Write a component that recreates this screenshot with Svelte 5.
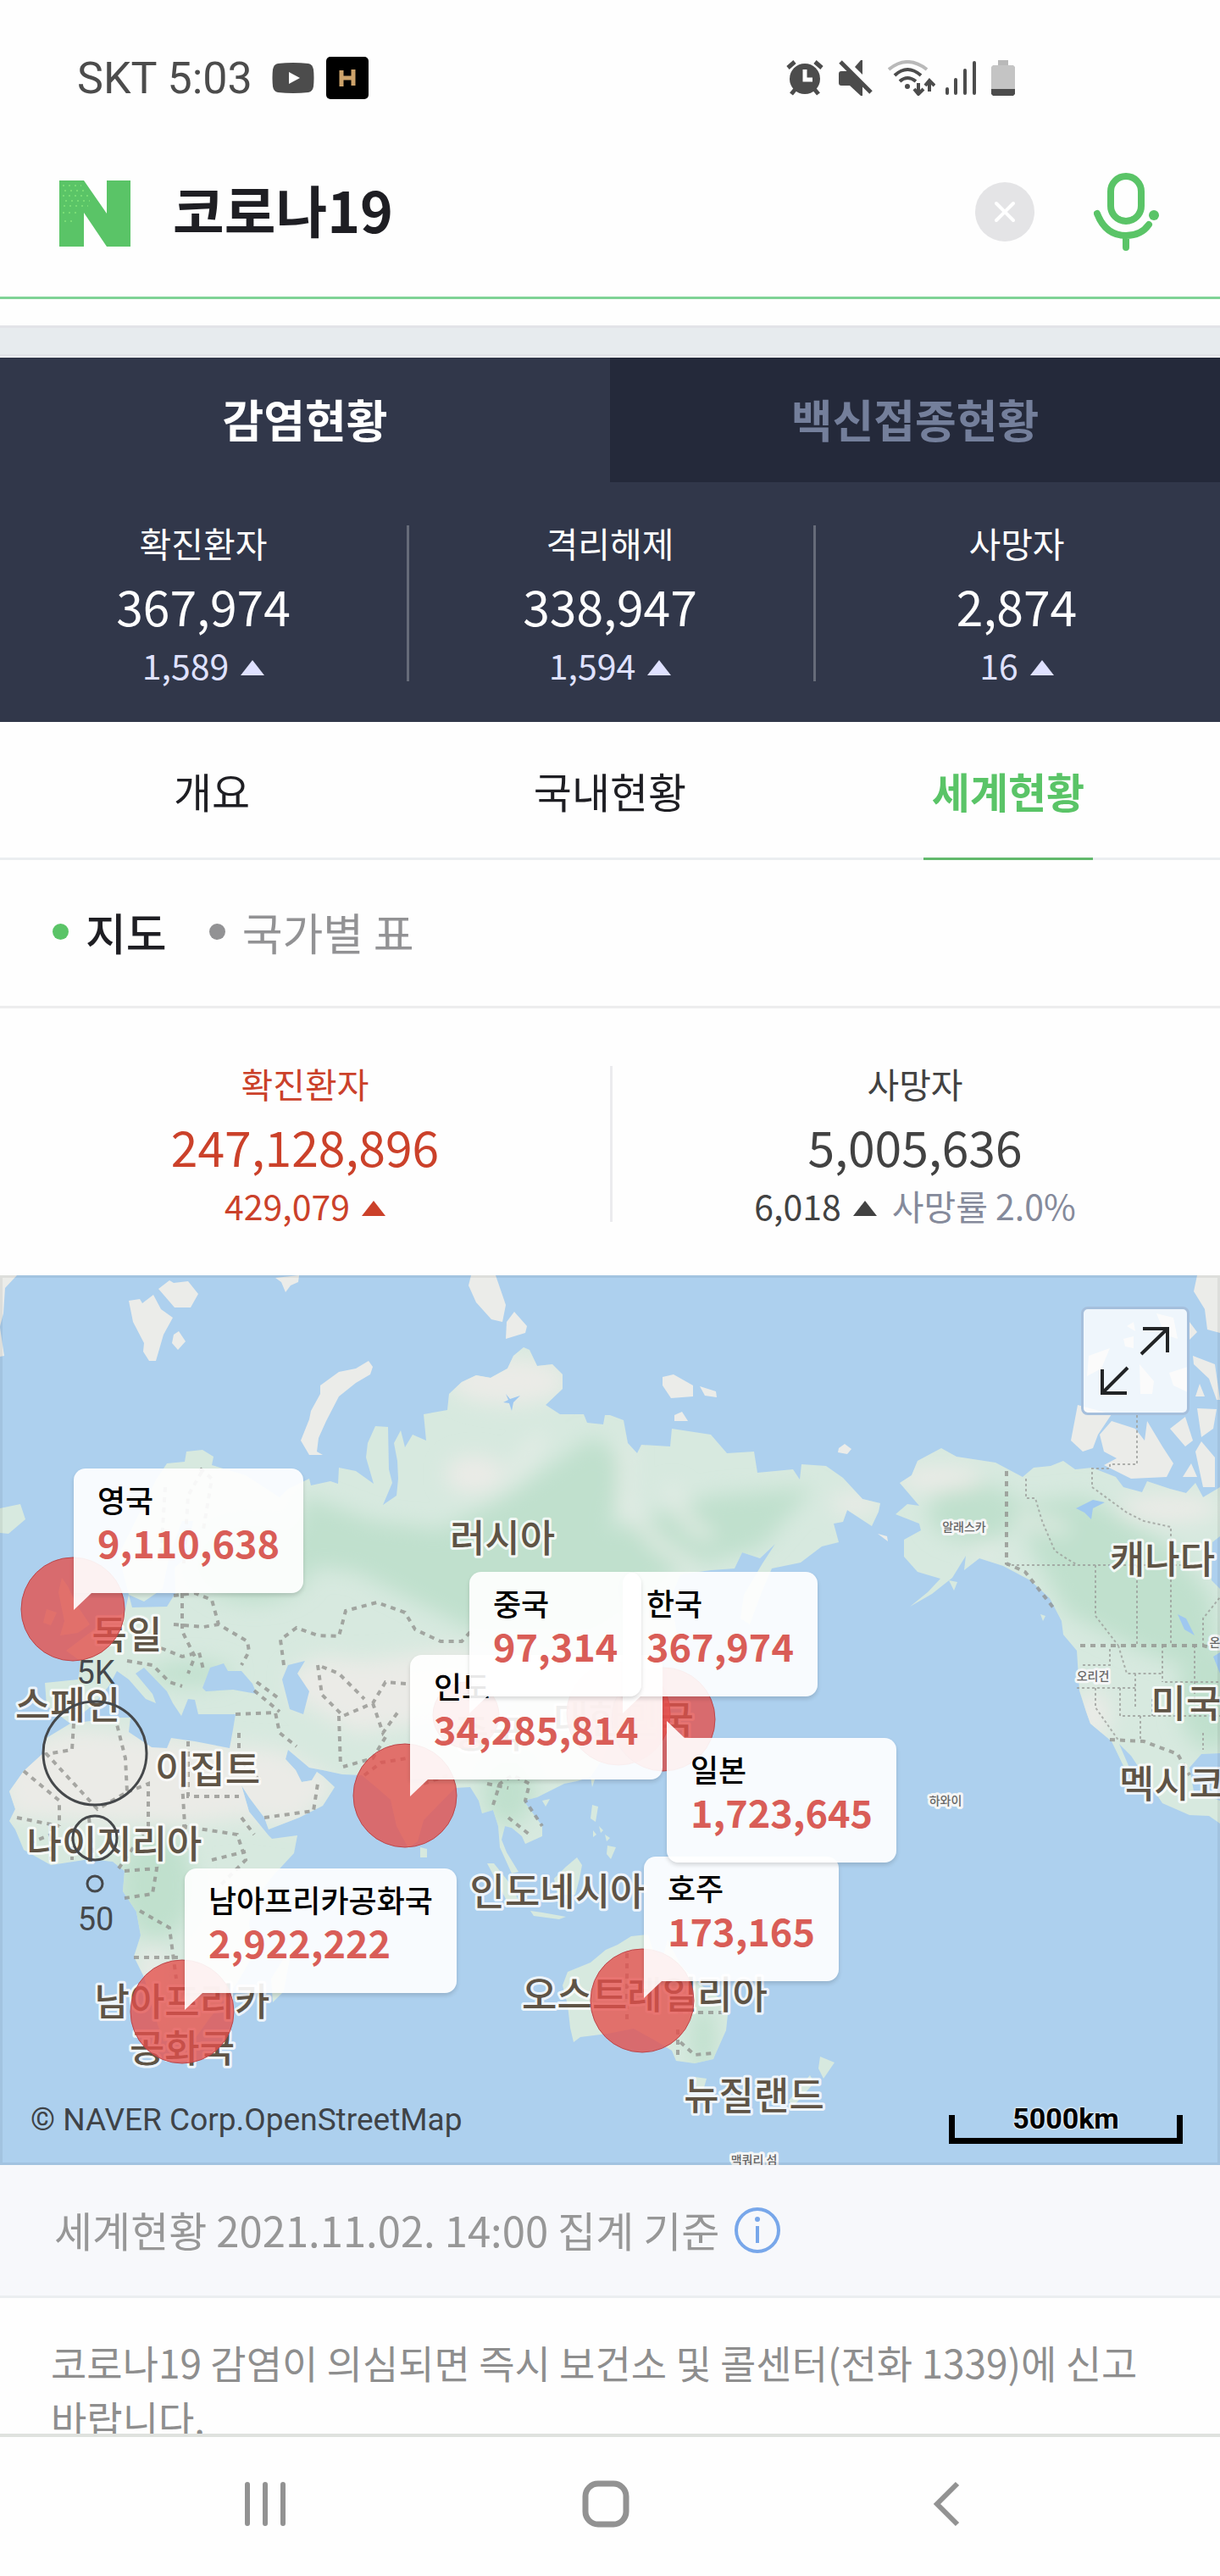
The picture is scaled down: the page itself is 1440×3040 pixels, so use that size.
<script lang="ts">
	interface Stat {
		label: string;
		total: string;
		change: string;
		tone?: string;
		rate?: string;
	}

	interface Pin {
		name: string;
		count: string;
		x: number;
		y: number;
		below?: boolean;
	}

	interface Place {
		text: string;
		x: number;
		y: number;
		small?: boolean;
	}

	const MAP_W = 1440;
	const MAP_H = 1050;

	let query = $state('코로나19');
	let mainTab = $state('감염현황');
	let subTab = $state('세계현황');
	let view = $state('지도');

	const mainTabs = ['감염현황', '백신접종현황'];
	const subTabs = ['개요', '국내현황', '세계현황'];
	const views = ['지도', '국가별 표'];

	const domestic: Stat[] = [
		{ label: '확진환자', total: '367,974', change: '1,589' },
		{ label: '격리해제', total: '338,947', change: '1,594' },
		{ label: '사망자', total: '2,874', change: '16' }
	];

	const world: Stat[] = [
		{ label: '확진환자', total: '247,128,896', change: '429,079', tone: 'red' },
		{ label: '사망자', total: '5,005,636', change: '6,018', rate: '사망률 2.0%' }
	];

	// later pins are painted over earlier ones
	const pins: Pin[] = [
		{ name: '영국', count: '9,110,638', x: 87, y: 395 },
		{ name: '남아프리카공화국', count: '2,922,222', x: 218, y: 867 },
		{ name: '호주', count: '173,165', x: 760, y: 853 },
		{ name: '인도', count: '34,285,814', x: 484, y: 615 },
		{ name: '한국', count: '367,974', x: 735, y: 517 },
		{ name: '중국', count: '97,314', x: 554, y: 517 },
		{ name: '일본', count: '1,723,645', x: 787, y: 526, below: true }
	];

	const bubbles = [
		{ x: 86, y: 394, r: 61 },
		{ x: 215, y: 869, r: 61 },
		{ x: 758, y: 856, r: 61 },
		{ x: 478, y: 614, r: 61 },
		{ x: 730, y: 517, r: 61 },
		{ x: 550, y: 519, r: 39 },
		{ x: 783, y: 524, r: 61 }
	];

	const places: Place[] = [
		{ text: '러시아', x: 593, y: 327 },
		{ text: '독일', x: 150, y: 441 },
		{ text: '스페인', x: 80, y: 524 },
		{ text: '이집트', x: 245, y: 600 },
		{ text: '나이지리아', x: 135, y: 688 },
		{ text: '남아프리카', x: 215, y: 874 },
		{ text: '공화국', x: 215, y: 929 },
		{ text: '중국', x: 577, y: 558 },
		{ text: '대한민국', x: 736, y: 541 },
		{ text: '인도네시아', x: 658, y: 744 },
		{ text: '오스트레일리아', x: 761, y: 866 },
		{ text: '뉴질랜드', x: 890, y: 985 },
		{ text: '캐나다', x: 1372, y: 352 },
		{ text: '미국', x: 1400, y: 522 },
		{ text: '멕시코', x: 1383, y: 617 },
		{ text: '알래스카', x: 1138, y: 302, small: true },
		{ text: '오리건', x: 1290, y: 478, small: true },
		{ text: '하와이', x: 1116, y: 625, small: true },
		{ text: '온', x: 1434, y: 438, small: true },
		{ text: '맥쿼리 섬', x: 890, y: 1049, small: true }
	];

	const eurasia =
		'M239 206L252 214 250 224 290 236 330 262 340 252 365 240 367 248 390 243 399 246 400 227 420 231 441 246 432 215 434 198 443 178 458 179 459 229 463 245 452 271 468 260 470 240 469 219 465 198 473 183 478 203 487 188 503 195 500 164 528 159 530 140 545 126 562 118 579 121 599 110 606 95 618 85 625 88 634 107 652 105 664 117 664 134 644 153 661 164 689 164 693 174 712 176 714 165 720 165 736 171 741 198 752 210 757 200 791 202 793 181 839 188 858 210 890 208 894 233 936 229 944 241 946 223 975 225 995 239 1018 264 1039 269 1037 279 1029 296 1000 277 995 291 984 293 990 315 970 320 945 339 911 346 899 374 885 412 874 405 878 377 900 340 915 317 897 334 876 327 867 346 839 348 803 353 792 380 800 430 770 465 752 490 768 520 750 545 735 515 716 510 726 530 712 570 697 592 681 597 666 600 646 610 634 616 618 620 640 650 640 662 620 671 616 662 604 652 596 650 592 666 598 681 612 704 604 706 590 675 588 650 582 631 569 635 565 620 555 604 537 605 500 643 493 668 482 676 468 650 461 619 445 605 427 590 404 589 381 584 365 581 340 560 337 571 349 584 356 598 368 596 374 586 381 591 395 604 381 626 353 640 317 654 312 640 294 616 285 602 294 633 317 661 321 665 351 661 347 682 321 710 298 741 294 765 300 800 280 835 248 876 230 901 193 904 186 884 170 828 158 804 166 779 161 751 145 727 147 703 133 692 106 689 60 696 28 678 18 654 11 644 18 630 11 609 28 585 51 564 55 546 83 529 55 508 53 481 92 477 96 456 78 443 115 415 147 398 152 377 140 330 160 290 185 240 197 222 218 220 220 208Z';

	const america =
		'M1111 204L1129 214 1175 221 1207 238 1220 227 1240 225 1255 219 1269 229 1289 227 1317 238 1326 250 1348 256 1354 243 1381 252 1400 257 1411 245 1420 262 1440 250V308L1431 315 1430 360 1440 370V564L1418 565 1404 581 1409 609 1440 620V647L1427 638 1404 637 1372 623 1358 602 1335 567 1321 553 1333 581 1326 579 1312 550 1287 529 1282 515 1274 490 1271 443 1255 424 1253 408 1239 381 1216 360 1184 343 1156 334 1138 348 1140 331 1124 357 1100 376 1074 391 1095 374 1110 358 1083 350 1067 332 1067 312 1087 301 1085 293 1057 282 1071 270 1085 272 1062 245 1076 236 1083 219 1096 212Z';

	const australia =
		'M670 822L697 811 715 796 729 790 745 780 765 778 772 800 782 806 788 784 804 815 828 838 848 852 859 872 857 891 844 920 842 925 820 930 798 927 793 915 775 904 748 889 717 895 685 899 677 905 673 888 670 861 664 838Z';

	const islands = [
		'M73 357L80 367 90 388 106 412 92 422 71 425 76 408 69 374Z',
		'M55 394L67 398 60 413 51 410Z',
		'M0 275L24 270 30 288 10 305 0 304Z',
		'M699 625L706 627 703 645 697 641Z',
		'M717 673L727 675 721 689 716 683Z',
		'M707 650L712 655 709 658ZM700 655L704 660 700 663ZM714 660L720 664 716 668Z',
		'M640 620L649 618 644 627Z',
		'M697 592L702 595 699 604Z',
		'M496 675L504 677 504 687 496 687Z',
		'M681 687L687 696 684 712 679 731 658 731 654 712 668 698Z',
		'M575 694L583 694 606 723 614 744 598 738Z',
		'M626 750L640 752 668 757 660 760 630 756Z',
		'M820 946L834 948 830 962 823 960Z',
		'M968 922L985 929 972 948 966 936Z',
		'M956 944L961 953 936 981 931 974Z',
		'M345 790L335 845 322 858 320 830Z',
		'M1120 360L1130 362 1126 372Z',
		'M1228 400L1234 402 1231 408Z'
	];

	const arctic = [
		'M0 0H20L6 15 4 45 0 60Z',
		'M0 62L5 95 0 96Z',
		'M152 30L165 28 168 33 181 23 190 40 204 50 193 70 184 101 176 101 169 90 170 80 157 55Z',
		'M187 16L200 6 205 9 222 7 234 22 225 38 206 38Z',
		'M205 70L211 66 219 78 210 88 203 80Z',
		'M325 3L353 0 352 8 343 12 337 20 332 8Z',
		'M435 101L440 108 437 117 420 127 400 143 385 172 376 192 374 208 381 212H365L355 195 365 170 367 160 378 140V130L400 114 420 110Z',
		'M556 0H585L597 35 593 55 580 52 562 32 553 12Z',
		'M607 43L622 60 620 68 597 75 598 55Z',
		'M782 120L795 117 818 130V143L792 145 782 130Z',
		'M826 131L845 137 846 144 832 142Z',
		'M796 165L805 161 812 172H796Z',
		'M990 204L997 199 1005 205 1000 211 989 209Z',
		'M1036 305L1047 308 1048 314Z',
		'M1272 153L1312 164 1296 188 1290 204 1278 208 1264 195Z',
		'M1298 188L1312 172 1340 181 1351 195 1354 172 1372 202 1385 222 1377 238 1335 240 1303 224 1318 216 1303 208Z',
		'M1381 181L1399 167 1408 195 1399 202Z',
		'M1413 157L1436 158 1432 181 1418 191Z',
		'M1418 196L1434 215V250H1420L1411 208Z',
		'M1413 0H1440V68L1425 64 1422 40 1409 19Z',
		'M1408 95L1434 105 1440 147H1436L1427 122 1409 105Z',
		'M1404 55L1413 67 1404 76ZM1416 128L1422 143H1411Z',
		'M1310 86L1300 110 1283 119 1285 95Z',
		'M1365 45L1385 50 1390 75 1375 70ZM1330 60L1338 55 1340 66ZM1326 75L1338 72 1338 86 1328 84Z',
		'M1380 115L1402 108V138L1385 130ZM1345 105L1362 125 1360 140 1346 140Z',
		'M1396 238L1406 222 1413 238Z'
	];

	const seas = [
		// baltic
		'M152 377L156 392 197 391 207 375 206 345 232 322 222 318 228 290 215 290 200 330 192 370 170 385Z',
		// black sea
		'M239 487L248 463 264 458 269 467 285 467 298 482 303 494 275 489 243 491Z',
		// caspian
		'M340 460L360 455 351 470 365 491 358 518 342 512 333 477Z',
		// mediterranean
		'M83 529L112 505 129 484 138 467 152 477 172 500 184 505 180 494 160 470 170 463 197 491 204 505 214 520 222 500 230 501 234 518 278 518 275 536 271 558 230 550 202 546 197 558 179 557 152 539 154 522 138 522Z'
	];

	const borders = [
		'M335 460L331 430 350 416 375 425 400 426 408 396 445 386 478 398 490 418 520 432 545 432 556 420',
		'M205 378L230 375 250 383 258 412 292 432 294 444 285 460',
		'M215 375V420L230 450 222 470M190 440L215 450 235 445 240 465M150 455L180 460 200 480 215 485M205 412L240 415 258 412',
		'M375 460L380 495 405 520 440 505 455 480 480 482M440 505L452 540 470 515M380 462L400 470 430 500',
		'M303 480L330 500M300 490L330 515M278 518L325 516 330 540 350 556M400 520L402 580M455 545L440 570 405 580',
		'M238 232L222 260 217 340M236 228L250 240 240 300M195 250L190 330',
		'M87 529L85 560 55 565 115 630 150 610 148 570 138 530M150 610L175 600V650L140 700M222 550V615H282M28 585L70 620V650M215 600L220 680',
		'M282 540V570L310 600M312 640L370 632 375 600M215 650L280 660 290 690 260 720M147 703L185 700 180 730 147 735M165 750L200 770 208 830M158 805H210',
		'M285 640L300 660M250 690L290 680M60 650V690M85 650V690M105 640L110 690M20 640L70 650M35 670L60 660',
		'M582 625L590 600 605 590 625 600 620 620 640 650M600 640L625 660M575 600L600 605M430 590L450 575 480 570M500 600L530 590',
		'M740 800V880M800 890V925M800 870H858M803 905L820 920 842 918'
	];

	const stateLines = [
		'M1342 165V223H1310V228H1289V250L1330 280 1350 290 1382 297V437M1211 240V263H1222L1230 290 1245 325 1260 335 1272 342M1188 342H1420',
		'M1293 342V402L1320 437M1342 342V437M1420 437V405L1440 380M1320 437L1330 470H1372M1340 470V510M1372 437V480M1410 437V520M1271 487H1340M1293 487V510L1321 550M1322 487V520H1440M1346 520V550M1375 480H1440M1360 500V520M1420 540V560M1278 460H1310V440'
	];
</script>

<div class="screen">
	<header class="status-bar">
		<span class="carrier">SKT 5:03</span>
		<svg class="youtube" width="50" height="36" viewBox="0 0 50 36" aria-hidden="true">
			<path d="M7 1Q25-1 43 1 48 2 49 8 50 18 49 28 48 34 43 35 25 37 7 35 2 34 1 28 0 18 1 8 2 2 7 1Z" fill="#4c4c4c" />
			<path d="M20 11L33 18 20 25Z" fill="#fff" />
		</svg>
		<span class="h-badge">
			<svg width="20" height="22" viewBox="0 0 20 22" aria-hidden="true">
				<path d="M3 2V21M17 1V20M3 11H17" stroke="#cda36b" stroke-width="5" fill="none" />
			</svg>
		</span>
		<div class="status-icons">
			<svg width="44" height="42" viewBox="0 0 44 42" aria-hidden="true">
				<circle cx="22" cy="22" r="18" fill="#4c4c4c" />
				<path d="M2 9L10 2M42 9L34 2M11 34L6 40M33 34L38 40" stroke="#4c4c4c" stroke-width="5" />
				<path d="M22 11V23H31" stroke="#fff" stroke-width="5" fill="none" />
			</svg>
			<svg class="muted" width="40" height="42" viewBox="0 0 40 42" aria-hidden="true">
				<path d="M3 13H11L28 29V42H26L13 30H3Q0 30 0 27V16Q0 13 3 13ZM19 8L26 0H28V17Z" fill="#4c4c4c" />
				<path d="M2 2L38 38" stroke="#4c4c4c" stroke-width="5" />
			</svg>
			<svg width="56" height="42" viewBox="0 0 56 42" fill="none" aria-hidden="true">
				<path d="M1 11Q23-7 46 11" stroke="#b9b9b9" stroke-width="4" />
				<path d="M8 18Q23 4 39 18M14 25Q23 17 33 25" stroke="#4c4c4c" stroke-width="4" />
				<circle cx="23" cy="31" r="3" fill="#4c4c4c" />
				<path d="M36 27V38M31 34L36 40 42 34M49 37V26M44 30L49 24 55 30" stroke="#4c4c4c" stroke-width="4" />
			</svg>
			<svg class="signal" width="36" height="40" viewBox="0 0 36 40" aria-hidden="true">
				<path d="M2 33V38M12 22V38M23 11V38M34 2V38" stroke="#4c4c4c" stroke-width="4" stroke-linecap="round" />
			</svg>
			<svg class="battery" width="28" height="42" viewBox="0 0 28 42" aria-hidden="true">
				<path d="M8 0H20V6H8Z" fill="#b9b9b9" />
				<path d="M2 6H26L28 8V34H0V8Z" fill="#c4c4c4" />
				<path d="M0 34H28V40L26 42H2L0 40Z" fill="#4c4c4c" />
			</svg>
		</div>
	</header>

	<form class="search" onsubmit={(e) => e.preventDefault()}>
		<a class="logo" href="/" aria-label="NAVER">
			<svg width="84" height="78" viewBox="0 0 84 78" aria-hidden="true">
				<path d="M0 0H29L56 39V0H84V78H56L29 38V78H0Z" fill="#5ac467" />
				<path
					d="M4 6H26M6 12H30M4 18H34M7 24H36M5 30H34M4 38H20M6 48H18"
					stroke="#78dc74"
					stroke-width="2"
					stroke-dasharray="2 5"
				/>
			</svg>
		</a>
		<input type="text" bind:value={query} aria-label="검색어" />
		<button type="button" class="clear" aria-label="지우기" onclick={() => (query = '')}>
			<svg width="26" height="26" viewBox="0 0 26 26" aria-hidden="true">
				<path d="M3 3L23 23M23 3L3 23" stroke="#fff" stroke-width="4" stroke-linecap="round" />
			</svg>
		</button>
		<button type="button" class="mic" aria-label="음성 검색">
			<svg width="78" height="92" viewBox="0 0 78 92" fill="none" stroke="#5ac467" stroke-width="8" aria-hidden="true">
				<rect x="20" y="4" width="36" height="53" rx="18" />
				<path d="M4 48Q14 74 38 74 56 74 65 61M38 75V88" stroke-linecap="round" />
				<circle cx="71" cy="50" r="6" fill="#5ac467" stroke="none" />
			</svg>
		</button>
	</form>

	<main class="content">
		<div class="band"></div>

		<nav class="main-tabs">
			{#each mainTabs as tab}
				<button class:active={mainTab === tab} onclick={() => (mainTab = tab)}>{tab}</button>
			{/each}
		</nav>

		<section class="stats dark">
			{#each domestic as stat}
				<div class="stat">
					<h2>{stat.label}</h2>
					<strong>{stat.total}</strong>
					<p>{stat.change}<i class="up"></i></p>
				</div>
			{/each}
		</section>

		<nav class="sub-tabs">
			{#each subTabs as tab}
				<button class:active={subTab === tab} onclick={() => (subTab = tab)}>{tab}</button>
			{/each}
		</nav>

		<div class="views">
			{#each views as item}
				<button class:active={view === item} onclick={() => (view = item)}>{item}</button>
			{/each}
		</div>

		<section class="stats light">
			{#each world as stat}
				<div class="stat {stat.tone}">
					<h2>{stat.label}</h2>
					<strong>{stat.total}</strong>
					<p>
						{stat.change}<i class="up"></i>
						{#if stat.rate}<span class="rate">{stat.rate}</span>{/if}
					</p>
				</div>
			{/each}
		</section>

		<section class="map">
			<svg class="world" viewBox="0 0 {MAP_W} {MAP_H}" role="img" aria-label="세계 지도">
				<defs>
					<clipPath id="land">
						<path d={eurasia} />
						<path d={america} />
						<path d={australia} />
					</clipPath>
					<filter id="soft" x="-20%" y="-20%" width="140%" height="140%">
						<feGaussianBlur stdDeviation="12" />
					</filter>
				</defs>

				<rect width={MAP_W} height={MAP_H} fill="#add0ee" />
				<g fill="#d7e9df">
					<path d={eurasia} />
					<path d={america} />
					<path d={australia} />
					{#each islands as d}<path {d} />{/each}
				</g>
				<g fill="#ebece9">
					{#each arctic as d}<path {d} />{/each}
				</g>

				<g clip-path="url(#land)">
					<g filter="url(#soft)">
						<g fill="#c0e0cd">
							<path d="M360 260L440 290 520 300 600 260 700 190 740 220 720 300 840 260 960 250 900 320 800 350 700 420 560 420 420 350 340 340Z" />
							<ellipse cx="300" cy="340" rx="70" ry="46" />
							<ellipse cx="185" cy="720" rx="44" ry="64" />
							<ellipse cx="225" cy="470" rx="50" ry="14" />
							<ellipse cx="600" cy="610" rx="30" ry="40" />
							<ellipse cx="830" cy="900" rx="14" ry="40" />
							<ellipse cx="1150" cy="280" rx="54" ry="34" />
							<path d="M1200 270L1280 260 1380 320 1430 380 1440 480 1340 440 1260 400 1220 330Z" />
							<ellipse cx="1430" cy="500" rx="40" ry="60" />
						</g>
						<g fill="#ebebe7">
							<path d="M0 560L90 535 280 555 330 560 400 600 350 650 290 640 200 650 10 640Z" />
							<path d="M340 470L380 450 430 455 540 440 620 470 560 520 420 540 350 500Z" />
							<ellipse cx="600" cy="125" rx="70" ry="28" />
							<ellipse cx="560" cy="235" rx="34" ry="22" />
							<ellipse cx="180" cy="830" rx="14" ry="40" />
							<ellipse cx="1110" cy="240" rx="50" ry="14" />
							<ellipse cx="1380" cy="275" rx="60" ry="16" />
							<ellipse cx="1290" cy="520" rx="20" ry="30" />
							<ellipse cx="1010" cy="270" rx="30" ry="12" />
						</g>
						<g fill="none" stroke="#e8ede8" stroke-width="12">
							<path d="M738 200L736 270 780 320 820 345M790 250L810 290 840 310M640 190L600 240M1150 330L1180 320M1200 285L1260 300" />
						</g>
					</g>
				</g>

				<g fill="#add0ee">
					{#each seas as d}<path {d} />{/each}
				</g>
				<g fill="none" stroke="#8f8f8b" stroke-width="4" stroke-dasharray="6 6" opacity="0.75">
					{#each borders as d}<path {d} />{/each}
					<path d="M1188 231V340L1210 350 1243 392M1275 437H1420L1440 442M1310 548L1350 550 1390 565 1404 590" />
				</g>
				<g fill="none" stroke="#9da09c" stroke-width="2" stroke-dasharray="3 3" opacity="0.8">
					{#each stateLines as d}<path {d} />{/each}
				</g>
				<g fill="#9fc8f0">
					<path d="M1270 275L1290 265 1304 268 1290 275 1288 288 1280 280ZM1390 400L1400 405 1410 425 1398 418ZM1432 450L1440 445V470ZM597 140L602 146 614 142 606 150 604 160 601 151 594 150 600 147Z" />
				</g>

				{#each places as place}
					<text class="place" class:small={place.small} x={place.x} y={place.y}>{place.text}</text>
				{/each}

				<g class="bubbles">
					{#each bubbles as bubble}
						<circle cx={bubble.x} cy={bubble.y} r={bubble.r} />
					{/each}
				</g>

				<g class="legend">
					<text x="113" y="482">5K</text>
					<circle cx="112" cy="564" r="61" />
					<circle cx="112" cy="664" r="26" />
					<circle cx="112" cy="718" r="9" />
					<text x="113" y="773">50</text>
				</g>
			</svg>

			{#each pins as pin}
				<div
					class="pin"
					class:below={pin.below}
					style="left: {(pin.x / MAP_W) * 100}%; top: {(pin.y / MAP_H) * 100}%"
				>
					<span class="name">{pin.name}</span>
					<span class="count">{pin.count}</span>
				</div>
			{/each}

			<button class="expand" aria-label="지도 확대">
				<svg width="82" height="82" viewBox="0 0 82 82" fill="none" stroke="#222426" stroke-width="4" aria-hidden="true">
					<path d="M50 3H79V31M79 3L48 33M2 51V79H31M2 79L32 49" />
				</svg>
			</button>

			<small class="copyright">© NAVER Corp.OpenStreetMap</small>
			<div class="scale">5000km</div>
		</section>

		<div class="basis">
			<span>세계현황 2021.11.02. 14:00 집계 기준</span>
			<button aria-label="안내">
				<svg width="54" height="54" viewBox="0 0 54 54" fill="none" stroke="#78a7ea" stroke-width="4" aria-hidden="true">
					<circle cx="27" cy="27" r="25" />
					<path d="M27 22V42" />
					<circle cx="27" cy="14" r="3" fill="#78a7ea" stroke="none" />
				</svg>
			</button>
		</div>

		<p class="notice">
			코로나19 감염이 의심되면 즉시 보건소 및 콜센터(전화 1339)에 신고 바랍니다.
		</p>
	</main>

	<footer class="nav-bar">
		<button aria-label="최근 앱">
			<svg width="50" height="56" viewBox="0 0 50 56" stroke="#929292" stroke-width="6" stroke-linecap="round" aria-hidden="true">
				<path d="M4 5V51M25 5V51M46 5V51" />
			</svg>
		</button>
		<button aria-label="홈">
			<svg width="56" height="56" viewBox="0 0 56 56" fill="none" stroke="#929292" stroke-width="7" aria-hidden="true">
				<rect x="4" y="4" width="48" height="48" rx="15" />
			</svg>
		</button>
		<button aria-label="뒤로">
			<svg width="32" height="56" viewBox="0 0 32 56" fill="none" stroke="#929292" stroke-width="6" aria-hidden="true">
				<path d="M29 4L5 28 29 52" />
			</svg>
		</button>
	</footer>
</div>

<style>
	:global(body) {
		margin: 0;
		background: #fefefe;
	}

	.screen {
		display: flex;
		flex-direction: column;
		height: 100vh;
		font-family: 'Noto Sans CJK KR', 'Noto Sans', sans-serif;
		color: #1e1e23;
		background: #fefefe;
	}

	button {
		margin: 0;
		padding: 0;
		border: 0;
		background: none;
		font: inherit;
		color: inherit;
		cursor: pointer;
	}

	svg {
		display: block;
	}

	h2,
	p {
		margin: 0;
		font-weight: 400;
	}

	.status-bar {
		display: flex;
		align-items: center;
		height: 100px;
		padding: 42px 242px 12px 91px;
	}

	.carrier {
		font-family: Roboto, sans-serif;
		font-size: 52px;
		color: #4c4c4c;
	}

	.youtube {
		margin: 0 14px 0 23px;
	}

	.h-badge {
		display: grid;
		place-items: center;
		width: 50px;
		height: 50px;
		border-radius: 5px;
		background: #000;
	}

	.status-icons {
		display: flex;
		align-items: center;
		gap: 18px;
		margin-left: auto;
	}

	.signal {
		margin-left: -6px;
	}

	.search {
		display: flex;
		align-items: center;
		height: 196px;
		padding: 0 71px 0 70px;
		border-bottom: 3px solid #7fd396;
	}

	.search input {
		flex: 1;
		min-width: 0;
		margin: 0 50px;
		padding: 0 0 12px;
		border: 0;
		outline: none;
		background: none;
		font: 700 66px/96px 'Noto Sans CJK KR', sans-serif;
		color: #1e1e23;
	}

	.clear,
	.mic {
		margin-bottom: 4px;
	}

	.clear {
		display: grid;
		place-items: center;
		width: 70px;
		height: 70px;
		margin-right: 70px;
		border-radius: 50%;
		background: #e4e4e6;
	}

	.content {
		flex: 1;
		min-height: 0;
		overflow: hidden;
	}

	.band {
		height: 31px;
		margin: 31px 0 1px;
		border: solid #e2e3e8;
		border-width: 3px 0;
		background: #e7ebee;
	}

	.main-tabs {
		display: grid;
		grid-template-columns: 1fr 1fr;
		background: #31374a;
	}

	.main-tabs button {
		height: 147px;
		padding-bottom: 4px;
		font-size: 53px;
		font-weight: 700;
		color: #747f9b;
		background: #24293a;
	}

	.main-tabs .active {
		color: #fff;
		background: #31374a;
	}

	.stats {
		display: flex;
		text-align: center;
	}

	.stat {
		position: relative;
		flex: 1;
	}

	.stat + .stat::before {
		content: '';
		position: absolute;
		left: 0;
		top: 8px;
		bottom: 4px;
		width: 3px;
		background: #ebebee;
	}

	.stat h2 {
		font-size: 41px;
		line-height: 56px;
	}

	.stat strong {
		display: block;
		font-size: 57px;
		font-weight: 400;
		line-height: 92px;
	}

	.stat p {
		display: flex;
		justify-content: center;
		align-items: center;
		font-size: 41px;
		line-height: 48px;
	}

	.up {
		margin: 8px 0 0 14px;
		border: 14px solid transparent;
		border-top-width: 0;
		border-bottom: 18px solid currentColor;
	}

	.dark {
		padding: 43px 0 44px;
		color: #fff;
		background: #31374a;
	}

	.dark .stat + .stat::before {
		background: #666b79;
	}

	.dark p {
		color: #dfe1ff;
	}

	.light {
		padding: 60px 0 59px;
		color: #424242;
	}

	.light .red {
		color: #cb412a;
	}

	.rate {
		margin-left: 18px;
		color: #858a9b;
	}

	.sub-tabs {
		display: flex;
		justify-content: space-around;
		padding: 0 15px;
		border-bottom: 3px solid #ebeef0;
	}

	.sub-tabs button {
		width: 200px;
		height: 163px;
		margin-bottom: -3px;
		border-bottom: 3px solid transparent;
		font-size: 49px;
	}

	.sub-tabs .active {
		border-color: #62b96c;
		font-weight: 700;
		color: #5ac467;
	}

	.views {
		display: flex;
		gap: 50px;
		padding: 0 62px;
		border-bottom: 3px solid #ededee;
	}

	.views button {
		display: flex;
		align-items: center;
		gap: 20px;
		height: 172px;
		padding-bottom: 4px;
		box-sizing: border-box;
		font-size: 52px;
		color: #929294;
	}

	.views button::before {
		content: '';
		width: 19px;
		height: 19px;
		border-radius: 50%;
		background: #929294;
	}

	.views .active {
		font-weight: 500;
		color: #1e1e23;
	}

	.views .active::before {
		background: #5ac467;
	}

	.map {
		position: relative;
		overflow: hidden;
	}

	.map::after {
		content: '';
		position: absolute;
		inset: 0;
		border: 3px solid rgba(0, 0, 0, 0.06);
		pointer-events: none;
	}

	.world {
		width: 100%;
		height: auto;
	}

	.place {
		font-size: 45px;
		font-weight: 500;
		text-anchor: middle;
		fill: #5f5446;
		stroke: rgba(255, 255, 255, 0.8);
		stroke-width: 6px;
		stroke-linejoin: round;
		paint-order: stroke;
	}

	.place.small {
		font-size: 14px;
		fill: #666;
		stroke: #f4f6f6;
	}

	.bubbles circle {
		fill: rgba(228, 78, 74, 0.78);
		stroke: #bd464a;
	}

	.legend circle {
		fill: none;
		stroke: #45484b;
		stroke-width: 3px;
	}

	.legend text {
		font-family: Roboto, sans-serif;
		font-size: 38px;
		text-anchor: middle;
		fill: #45484b;
	}

	.pin {
		position: absolute;
		display: flex;
		flex-direction: column;
		box-sizing: border-box;
		height: 147px;
		margin-top: -167px;
		padding: 12px 28px 0;
		border-radius: 14px 14px 14px 0;
		background: rgba(255, 255, 255, 0.91);
		box-shadow: 0 3px 5px rgba(0, 0, 0, 0.14);
		white-space: nowrap;
		color: #000;
	}

	.pin::before {
		content: '';
		position: absolute;
		left: 0;
		top: 100%;
		width: 21px;
		height: 20px;
		background: rgba(255, 255, 255, 0.91);
		clip-path: polygon(0 0, 100% 0, 0 100%);
	}

	.pin.below {
		margin-top: 20px;
		border-radius: 0 14px 14px 14px;
	}

	.pin.below::before {
		top: auto;
		bottom: 100%;
		clip-path: polygon(0 0, 100% 100%, 0 100%);
	}

	.name {
		font-size: 36px;
		font-weight: 500;
		line-height: 48px;
	}

	.count {
		font-size: 45px;
		font-weight: 700;
		line-height: 54px;
		color: #d95d57;
	}

	.expand {
		position: absolute;
		top: 37px;
		right: 36px;
		display: grid;
		place-items: center;
		width: 128px;
		height: 128px;
		border: 3px solid #a5bfdc;
		border-radius: 8px;
		background: rgba(255, 255, 255, 0.8);
	}

	.copyright {
		position: absolute;
		left: 36px;
		bottom: 29px;
		font: 37px/48px Roboto, sans-serif;
		color: #3f4347;
	}

	.scale {
		position: absolute;
		right: 44px;
		bottom: 25px;
		width: 262px;
		border: solid #000;
		border-width: 0 7px 7px;
		border-image: linear-gradient(to top, #000 30px, transparent 30px) 7;
		font: 700 34px/46px Roboto, sans-serif;
		text-align: center;
		color: #000;
		text-shadow: 0 0 3px #fff, 0 0 3px #fff;
	}

	.basis {
		display: flex;
		align-items: center;
		gap: 18px;
		height: 154px;
		padding: 0 64px;
		border-bottom: 3px solid #ebeef0;
		font-size: 49px;
		color: #979797;
		background: #f7f8fb;
	}

	.basis span {
		padding-bottom: 4px;
	}

	.notice {
		padding: 42px 60px 0;
		font-size: 46px;
		line-height: 66px;
		color: #8e8e8e;
		word-break: keep-all;
	}

	.nav-bar {
		display: grid;
		grid-template-columns: repeat(3, 1fr);
		align-items: center;
		height: 164px;
		padding: 0 122px 0 112px;
		border-top: 4px solid #dfe2de;
	}

	.nav-bar button {
		display: grid;
		place-items: center;
		height: 100px;
		margin-bottom: 6px;
	}
</style>
